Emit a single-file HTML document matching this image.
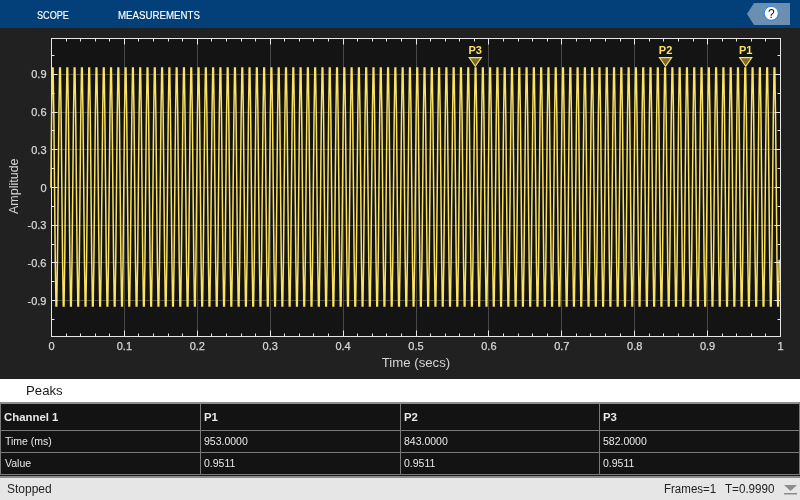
<!DOCTYPE html>
<html><head><meta charset="utf-8">
<style>
*{margin:0;padding:0;box-sizing:border-box}
html,body{width:800px;height:500px;overflow:hidden;background:#212121;font-family:"Liberation Sans",sans-serif}
#wrap{position:absolute;left:0;top:0;width:800px;height:500px;will-change:transform}
#hdr{position:absolute;left:0;top:0;width:800px;height:28px;background:#03407a}
.tab{position:absolute;top:8px;color:#fff;font-size:10.5px;-webkit-text-stroke:0.15px #fff;line-height:14px;white-space:nowrap;transform-origin:0 0}
#plot{position:absolute;left:0;top:0;width:800px;height:380px}
#plot text{font-family:"Liberation Sans",sans-serif}
#peaks{position:absolute;left:0;top:379px;width:800px;height:24px;background:#fff}
#peaks span{position:absolute;left:26px;top:4.4px;font-size:13.2px;color:#1a1a1a}
#tbl{position:absolute;left:0;top:402px;width:800px;height:73px;background:#131313;border:solid #7a7a7a;border-width:2px 1px 1px 1px;border-top-color:#8e8e8e}
#sep{position:absolute;left:0;top:475px;width:800px;height:3px;background:#1c1c1c;border-bottom:2px solid #8a8a8a}
.cell{position:absolute;color:#e8e8e8;font-size:10.5px;white-space:nowrap}
.hl{position:absolute;background:#7a7a7a}
#status{position:absolute;left:0;top:478px;width:800px;height:22px;background:#e6e6e6;color:#222;font-size:12px}
</style></head><body><div id="wrap">
<div id="hdr">
<div class="tab" style="left:37px;transform:scaleX(0.866)">SCOPE</div>
<div class="tab" style="left:118px;transform:scaleX(0.923)">MEASUREMENTS</div>
<svg style="position:absolute;left:747px;top:3px" width="43" height="22" viewBox="0 0 43 22">
<path d="M7 0H43V22H7L0 11Z" fill="#6a8fb3"/>
<circle cx="24.3" cy="10.3" r="7" fill="#fff" stroke="#2a82d8" stroke-width="1"/>
<text x="24.3" y="14.5" text-anchor="middle" font-size="12" fill="#111" font-family="Liberation Sans">?</text>
</svg>
</div>
<svg id="plot" width="800" height="380" viewBox="0 0 800 380">
<rect x="51" y="38" width="730" height="299" fill="#141414"/>
<path d="M124.50 38V337M197.50 38V337M270.50 38V337M343.50 38V337M416.50 38V337M488.50 38V337M561.50 38V337M634.50 38V337M707.50 38V337M51 74.50H781M51 112.50H781M51 149.50H781M51 187.50H781M51 225.50H781M51 262.50H781M51 300.50H781" stroke="#484848" stroke-width="1" fill="none"/>
<rect x="51.5" y="38.5" width="729" height="298" fill="none" stroke="#e6e6e6" stroke-width="1"/>
<path fill="none" stroke="#fae262" stroke-width="1.5" stroke-linecap="square" d="M50.90 187.00L51.63 113.41M51.63 113.41L52.36 67.93M52.36 67.93L53.09 67.93M53.09 67.93L53.82 113.41M53.82 113.41L54.55 187.00M54.55 187.00L55.27 260.59M55.27 260.59L56.00 306.07M56.00 306.07L56.73 306.07M56.73 306.07L57.46 260.59M57.46 260.59L58.19 187.00M58.19 187.00L58.92 113.41M58.92 113.41L59.65 67.93M59.65 67.93L60.38 67.93M60.38 67.93L61.11 113.41M61.11 113.41L61.84 187.00M61.84 187.00L62.56 260.59M62.56 260.59L63.29 306.07M63.29 306.07L64.02 306.07M64.02 306.07L64.75 260.59M64.75 260.59L65.48 187.00M65.48 187.00L66.21 113.41M66.21 113.41L66.94 67.93M66.94 67.93L67.67 67.93M67.67 67.93L68.40 113.41M68.40 113.41L69.12 187.00M69.12 187.00L69.85 260.59M69.85 260.59L70.58 306.07M70.58 306.07L71.31 306.07M71.31 306.07L72.04 260.59M72.04 260.59L72.77 187.00M72.77 187.00L73.50 113.41M73.50 113.41L74.23 67.93M74.23 67.93L74.96 67.93M74.96 67.93L75.69 113.41M75.69 113.41L76.42 187.00M76.42 187.00L77.14 260.59M77.14 260.59L77.87 306.07M77.87 306.07L78.60 306.07M78.60 306.07L79.33 260.59M79.33 260.59L80.06 187.00M80.06 187.00L80.79 113.41M80.79 113.41L81.52 67.93M81.52 67.93L82.25 67.93M82.25 67.93L82.98 113.41M82.98 113.41L83.71 187.00M83.71 187.00L84.43 260.59M84.43 260.59L85.16 306.07M85.16 306.07L85.89 306.07M85.89 306.07L86.62 260.59M86.62 260.59L87.35 187.00M87.35 187.00L88.08 113.41M88.08 113.41L88.81 67.93M88.81 67.93L89.54 67.93M89.54 67.93L90.27 113.41M90.27 113.41L91.00 187.00M91.00 187.00L91.72 260.59M91.72 260.59L92.45 306.07M92.45 306.07L93.18 306.07M93.18 306.07L93.91 260.59M93.91 260.59L94.64 187.00M94.64 187.00L95.37 113.41M95.37 113.41L96.10 67.93M96.10 67.93L96.83 67.93M96.83 67.93L97.56 113.41M97.56 113.41L98.29 187.00M98.29 187.00L99.01 260.59M99.01 260.59L99.74 306.07M99.74 306.07L100.47 306.07M100.47 306.07L101.20 260.59M101.20 260.59L101.93 187.00M101.93 187.00L102.66 113.41M102.66 113.41L103.39 67.93M103.39 67.93L104.12 67.93M104.12 67.93L104.85 113.41M104.85 113.41L105.58 187.00M105.58 187.00L106.30 260.59M106.30 260.59L107.03 306.07M107.03 306.07L107.76 306.07M107.76 306.07L108.49 260.59M108.49 260.59L109.22 187.00M109.22 187.00L109.95 113.41M109.95 113.41L110.68 67.93M110.68 67.93L111.41 67.93M111.41 67.93L112.14 113.41M112.14 113.41L112.87 187.00M112.87 187.00L113.59 260.59M113.59 260.59L114.32 306.07M114.32 306.07L115.05 306.07M115.05 306.07L115.78 260.59M115.78 260.59L116.51 187.00M116.51 187.00L117.24 113.41M117.24 113.41L117.97 67.93M117.97 67.93L118.70 67.93M118.70 67.93L119.43 113.41M119.43 113.41L120.16 187.00M120.16 187.00L120.88 260.59M120.88 260.59L121.61 306.07M121.61 306.07L122.34 306.07M122.34 306.07L123.07 260.59M123.07 260.59L123.80 187.00M123.80 187.00L124.53 113.41M124.53 113.41L125.26 67.93M125.26 67.93L125.99 67.93M125.99 67.93L126.72 113.41M126.72 113.41L127.45 187.00M127.45 187.00L128.17 260.59M128.17 260.59L128.90 306.07M128.90 306.07L129.63 306.07M129.63 306.07L130.36 260.59M130.36 260.59L131.09 187.00M131.09 187.00L131.82 113.41M131.82 113.41L132.55 67.93M132.55 67.93L133.28 67.93M133.28 67.93L134.01 113.41M134.01 113.41L134.74 187.00M134.74 187.00L135.46 260.59M135.46 260.59L136.19 306.07M136.19 306.07L136.92 306.07M136.92 306.07L137.65 260.59M137.65 260.59L138.38 187.00M138.38 187.00L139.11 113.41M139.11 113.41L139.84 67.93M139.84 67.93L140.57 67.93M140.57 67.93L141.30 113.41M141.30 113.41L142.03 187.00M142.03 187.00L142.75 260.59M142.75 260.59L143.48 306.07M143.48 306.07L144.21 306.07M144.21 306.07L144.94 260.59M144.94 260.59L145.67 187.00M145.67 187.00L146.40 113.41M146.40 113.41L147.13 67.93M147.13 67.93L147.86 67.93M147.86 67.93L148.59 113.41M148.59 113.41L149.32 187.00M149.32 187.00L150.04 260.59M150.04 260.59L150.77 306.07M150.77 306.07L151.50 306.07M151.50 306.07L152.23 260.59M152.23 260.59L152.96 187.00M152.96 187.00L153.69 113.41M153.69 113.41L154.42 67.93M154.42 67.93L155.15 67.93M155.15 67.93L155.88 113.41M155.88 113.41L156.60 187.00M156.60 187.00L157.33 260.59M157.33 260.59L158.06 306.07M158.06 306.07L158.79 306.07M158.79 306.07L159.52 260.59M159.52 260.59L160.25 187.00M160.25 187.00L160.98 113.41M160.98 113.41L161.71 67.93M161.71 67.93L162.44 67.93M162.44 67.93L163.17 113.41M163.17 113.41L163.90 187.00M163.90 187.00L164.62 260.59M164.62 260.59L165.35 306.07M165.35 306.07L166.08 306.07M166.08 306.07L166.81 260.59M166.81 260.59L167.54 187.00M167.54 187.00L168.27 113.41M168.27 113.41L169.00 67.93M169.00 67.93L169.73 67.93M169.73 67.93L170.46 113.41M170.46 113.41L171.19 187.00M171.19 187.00L171.91 260.59M171.91 260.59L172.64 306.07M172.64 306.07L173.37 306.07M173.37 306.07L174.10 260.59M174.10 260.59L174.83 187.00M174.83 187.00L175.56 113.41M175.56 113.41L176.29 67.93M176.29 67.93L177.02 67.93M177.02 67.93L177.75 113.41M177.75 113.41L178.47 187.00M178.47 187.00L179.20 260.59M179.20 260.59L179.93 306.07M179.93 306.07L180.66 306.07M180.66 306.07L181.39 260.59M181.39 260.59L182.12 187.00M182.12 187.00L182.85 113.41M182.85 113.41L183.58 67.93M183.58 67.93L184.31 67.93M184.31 67.93L185.04 113.41M185.04 113.41L185.77 187.00M185.77 187.00L186.49 260.59M186.49 260.59L187.22 306.07M187.22 306.07L187.95 306.07M187.95 306.07L188.68 260.59M188.68 260.59L189.41 187.00M189.41 187.00L190.14 113.41M190.14 113.41L190.87 67.93M190.87 67.93L191.60 67.93M191.60 67.93L192.33 113.41M192.33 113.41L193.06 187.00M193.06 187.00L193.78 260.59M193.78 260.59L194.51 306.07M194.51 306.07L195.24 306.07M195.24 306.07L195.97 260.59M195.97 260.59L196.70 187.00M196.70 187.00L197.43 113.41M197.43 113.41L198.16 67.93M198.16 67.93L198.89 67.93M198.89 67.93L199.62 113.41M199.62 113.41L200.34 187.00M200.34 187.00L201.07 260.59M201.07 260.59L201.80 306.07M201.80 306.07L202.53 306.07M202.53 306.07L203.26 260.59M203.26 260.59L203.99 187.00M203.99 187.00L204.72 113.41M204.72 113.41L205.45 67.93M205.45 67.93L206.18 67.93M206.18 67.93L206.91 113.41M206.91 113.41L207.63 187.00M207.63 187.00L208.36 260.59M208.36 260.59L209.09 306.07M209.09 306.07L209.82 306.07M209.82 306.07L210.55 260.59M210.55 260.59L211.28 187.00M211.28 187.00L212.01 113.41M212.01 113.41L212.74 67.93M212.74 67.93L213.47 67.93M213.47 67.93L214.20 113.41M214.20 113.41L214.93 187.00M214.93 187.00L215.65 260.59M215.65 260.59L216.38 306.07M216.38 306.07L217.11 306.07M217.11 306.07L217.84 260.59M217.84 260.59L218.57 187.00M218.57 187.00L219.30 113.41M219.30 113.41L220.03 67.93M220.03 67.93L220.76 67.93M220.76 67.93L221.49 113.41M221.49 113.41L222.22 187.00M222.22 187.00L222.94 260.59M222.94 260.59L223.67 306.07M223.67 306.07L224.40 306.07M224.40 306.07L225.13 260.59M225.13 260.59L225.86 187.00M225.86 187.00L226.59 113.41M226.59 113.41L227.32 67.93M227.32 67.93L228.05 67.93M228.05 67.93L228.78 113.41M228.78 113.41L229.50 187.00M229.50 187.00L230.23 260.59M230.23 260.59L230.96 306.07M230.96 306.07L231.69 306.07M231.69 306.07L232.42 260.59M232.42 260.59L233.15 187.00M233.15 187.00L233.88 113.41M233.88 113.41L234.61 67.93M234.61 67.93L235.34 67.93M235.34 67.93L236.07 113.41M236.07 113.41L236.80 187.00M236.80 187.00L237.52 260.59M237.52 260.59L238.25 306.07M238.25 306.07L238.98 306.07M238.98 306.07L239.71 260.59M239.71 260.59L240.44 187.00M240.44 187.00L241.17 113.41M241.17 113.41L241.90 67.93M241.90 67.93L242.63 67.93M242.63 67.93L243.36 113.41M243.36 113.41L244.09 187.00M244.09 187.00L244.81 260.59M244.81 260.59L245.54 306.07M245.54 306.07L246.27 306.07M246.27 306.07L247.00 260.59M247.00 260.59L247.73 187.00M247.73 187.00L248.46 113.41M248.46 113.41L249.19 67.93M249.19 67.93L249.92 67.93M249.92 67.93L250.65 113.41M250.65 113.41L251.38 187.00M251.38 187.00L252.10 260.59M252.10 260.59L252.83 306.07M252.83 306.07L253.56 306.07M253.56 306.07L254.29 260.59M254.29 260.59L255.02 187.00M255.02 187.00L255.75 113.41M255.75 113.41L256.48 67.93M256.48 67.93L257.21 67.93M257.21 67.93L257.94 113.41M257.94 113.41L258.66 187.00M258.66 187.00L259.39 260.59M259.39 260.59L260.12 306.07M260.12 306.07L260.85 306.07M260.85 306.07L261.58 260.59M261.58 260.59L262.31 187.00M262.31 187.00L263.04 113.41M263.04 113.41L263.77 67.93M263.77 67.93L264.50 67.93M264.50 67.93L265.23 113.41M265.23 113.41L265.95 187.00M265.95 187.00L266.68 260.59M266.68 260.59L267.41 306.07M267.41 306.07L268.14 306.07M268.14 306.07L268.87 260.59M268.87 260.59L269.60 187.00M269.60 187.00L270.33 113.41M270.33 113.41L271.06 67.93M271.06 67.93L271.79 67.93M271.79 67.93L272.52 113.41M272.52 113.41L273.25 187.00M273.25 187.00L273.97 260.59M273.97 260.59L274.70 306.07M274.70 306.07L275.43 306.07M275.43 306.07L276.16 260.59M276.16 260.59L276.89 187.00M276.89 187.00L277.62 113.41M277.62 113.41L278.35 67.93M278.35 67.93L279.08 67.93M279.08 67.93L279.81 113.41M279.81 113.41L280.53 187.00M280.53 187.00L281.26 260.59M281.26 260.59L281.99 306.07M281.99 306.07L282.72 306.07M282.72 306.07L283.45 260.59M283.45 260.59L284.18 187.00M284.18 187.00L284.91 113.41M284.91 113.41L285.64 67.93M285.64 67.93L286.37 67.93M286.37 67.93L287.10 113.41M287.10 113.41L287.82 187.00M287.82 187.00L288.55 260.59M288.55 260.59L289.28 306.07M289.28 306.07L290.01 306.07M290.01 306.07L290.74 260.59M290.74 260.59L291.47 187.00M291.47 187.00L292.20 113.41M292.20 113.41L292.93 67.93M292.93 67.93L293.66 67.93M293.66 67.93L294.39 113.41M294.39 113.41L295.12 187.00M295.12 187.00L295.84 260.59M295.84 260.59L296.57 306.07M296.57 306.07L297.30 306.07M297.30 306.07L298.03 260.59M298.03 260.59L298.76 187.00M298.76 187.00L299.49 113.41M299.49 113.41L300.22 67.93M300.22 67.93L300.95 67.93M300.95 67.93L301.68 113.41M301.68 113.41L302.40 187.00M302.40 187.00L303.13 260.59M303.13 260.59L303.86 306.07M303.86 306.07L304.59 306.07M304.59 306.07L305.32 260.59M305.32 260.59L306.05 187.00M306.05 187.00L306.78 113.41M306.78 113.41L307.51 67.93M307.51 67.93L308.24 67.93M308.24 67.93L308.97 113.41M308.97 113.41L309.69 187.00M309.69 187.00L310.42 260.59M310.42 260.59L311.15 306.07M311.15 306.07L311.88 306.07M311.88 306.07L312.61 260.59M312.61 260.59L313.34 187.00M313.34 187.00L314.07 113.41M314.07 113.41L314.80 67.93M314.80 67.93L315.53 67.93M315.53 67.93L316.26 113.41M316.26 113.41L316.98 187.00M316.98 187.00L317.71 260.59M317.71 260.59L318.44 306.07M318.44 306.07L319.17 306.07M319.17 306.07L319.90 260.59M319.90 260.59L320.63 187.00M320.63 187.00L321.36 113.41M321.36 113.41L322.09 67.93M322.09 67.93L322.82 67.93M322.82 67.93L323.55 113.41M323.55 113.41L324.27 187.00M324.27 187.00L325.00 260.59M325.00 260.59L325.73 306.07M325.73 306.07L326.46 306.07M326.46 306.07L327.19 260.59M327.19 260.59L327.92 187.00M327.92 187.00L328.65 113.41M328.65 113.41L329.38 67.93M329.38 67.93L330.11 67.93M330.11 67.93L330.84 113.41M330.84 113.41L331.56 187.00M331.56 187.00L332.29 260.59M332.29 260.59L333.02 306.07M333.02 306.07L333.75 306.07M333.75 306.07L334.48 260.59M334.48 260.59L335.21 187.00M335.21 187.00L335.94 113.41M335.94 113.41L336.67 67.93M336.67 67.93L337.40 67.93M337.40 67.93L338.13 113.41M338.13 113.41L338.86 187.00M338.86 187.00L339.58 260.59M339.58 260.59L340.31 306.07M340.31 306.07L341.04 306.07M341.04 306.07L341.77 260.59M341.77 260.59L342.50 187.00M342.50 187.00L343.23 113.41M343.23 113.41L343.96 67.93M343.96 67.93L344.69 67.93M344.69 67.93L345.42 113.41M345.42 113.41L346.14 187.00M346.14 187.00L346.87 260.59M346.87 260.59L347.60 306.07M347.60 306.07L348.33 306.07M348.33 306.07L349.06 260.59M349.06 260.59L349.79 187.00M349.79 187.00L350.52 113.41M350.52 113.41L351.25 67.93M351.25 67.93L351.98 67.93M351.98 67.93L352.71 113.41M352.71 113.41L353.43 187.00M353.43 187.00L354.16 260.59M354.16 260.59L354.89 306.07M354.89 306.07L355.62 306.07M355.62 306.07L356.35 260.59M356.35 260.59L357.08 187.00M357.08 187.00L357.81 113.41M357.81 113.41L358.54 67.93M358.54 67.93L359.27 67.93M359.27 67.93L360.00 113.41M360.00 113.41L360.72 187.00M360.72 187.00L361.45 260.59M361.45 260.59L362.18 306.07M362.18 306.07L362.91 306.07M362.91 306.07L363.64 260.59M363.64 260.59L364.37 187.00M364.37 187.00L365.10 113.41M365.10 113.41L365.83 67.93M365.83 67.93L366.56 67.93M366.56 67.93L367.29 113.41M367.29 113.41L368.01 187.00M368.01 187.00L368.74 260.59M368.74 260.59L369.47 306.07M369.47 306.07L370.20 306.07M370.20 306.07L370.93 260.59M370.93 260.59L371.66 187.00M371.66 187.00L372.39 113.41M372.39 113.41L373.12 67.93M373.12 67.93L373.85 67.93M373.85 67.93L374.58 113.41M374.58 113.41L375.31 187.00M375.31 187.00L376.03 260.59M376.03 260.59L376.76 306.07M376.76 306.07L377.49 306.07M377.49 306.07L378.22 260.59M378.22 260.59L378.95 187.00M378.95 187.00L379.68 113.41M379.68 113.41L380.41 67.93M380.41 67.93L381.14 67.93M381.14 67.93L381.87 113.41M381.87 113.41L382.59 187.00M382.59 187.00L383.32 260.59M383.32 260.59L384.05 306.07M384.05 306.07L384.78 306.07M384.78 306.07L385.51 260.59M385.51 260.59L386.24 187.00M386.24 187.00L386.97 113.41M386.97 113.41L387.70 67.93M387.70 67.93L388.43 67.93M388.43 67.93L389.16 113.41M389.16 113.41L389.88 187.00M389.88 187.00L390.61 260.59M390.61 260.59L391.34 306.07M391.34 306.07L392.07 306.07M392.07 306.07L392.80 260.59M392.80 260.59L393.53 187.00M393.53 187.00L394.26 113.41M394.26 113.41L394.99 67.93M394.99 67.93L395.72 67.93M395.72 67.93L396.45 113.41M396.45 113.41L397.17 187.00M397.17 187.00L397.90 260.59M397.90 260.59L398.63 306.07M398.63 306.07L399.36 306.07M399.36 306.07L400.09 260.59M400.09 260.59L400.82 187.00M400.82 187.00L401.55 113.41M401.55 113.41L402.28 67.93M402.28 67.93L403.01 67.93M403.01 67.93L403.74 113.41M403.74 113.41L404.46 187.00M404.46 187.00L405.19 260.59M405.19 260.59L405.92 306.07M405.92 306.07L406.65 306.07M406.65 306.07L407.38 260.59M407.38 260.59L408.11 187.00M408.11 187.00L408.84 113.41M408.84 113.41L409.57 67.93M409.57 67.93L410.30 67.93M410.30 67.93L411.03 113.41M411.03 113.41L411.75 187.00M411.75 187.00L412.48 260.59M412.48 260.59L413.21 306.07M413.21 306.07L413.94 306.07M413.94 306.07L414.67 260.59M414.67 260.59L415.40 187.00M415.40 187.00L416.13 113.41M416.13 113.41L416.86 67.93M416.86 67.93L417.59 67.93M417.59 67.93L418.32 113.41M418.32 113.41L419.04 187.00M419.04 187.00L419.77 260.59M419.77 260.59L420.50 306.07M420.50 306.07L421.23 306.07M421.23 306.07L421.96 260.59M421.96 260.59L422.69 187.00M422.69 187.00L423.42 113.41M423.42 113.41L424.15 67.93M424.15 67.93L424.88 67.93M424.88 67.93L425.61 113.41M425.61 113.41L426.33 187.00M426.33 187.00L427.06 260.59M427.06 260.59L427.79 306.07M427.79 306.07L428.52 306.07M428.52 306.07L429.25 260.59M429.25 260.59L429.98 187.00M429.98 187.00L430.71 113.41M430.71 113.41L431.44 67.93M431.44 67.93L432.17 67.93M432.17 67.93L432.90 113.41M432.90 113.41L433.62 187.00M433.62 187.00L434.35 260.59M434.35 260.59L435.08 306.07M435.08 306.07L435.81 306.07M435.81 306.07L436.54 260.59M436.54 260.59L437.27 187.00M437.27 187.00L438.00 113.41M438.00 113.41L438.73 67.93M438.73 67.93L439.46 67.93M439.46 67.93L440.19 113.41M440.19 113.41L440.92 187.00M440.92 187.00L441.64 260.59M441.64 260.59L442.37 306.07M442.37 306.07L443.10 306.07M443.10 306.07L443.83 260.59M443.83 260.59L444.56 187.00M444.56 187.00L445.29 113.41M445.29 113.41L446.02 67.93M446.02 67.93L446.75 67.93M446.75 67.93L447.48 113.41M447.48 113.41L448.20 187.00M448.20 187.00L448.93 260.59M448.93 260.59L449.66 306.07M449.66 306.07L450.39 306.07M450.39 306.07L451.12 260.59M451.12 260.59L451.85 187.00M451.85 187.00L452.58 113.41M452.58 113.41L453.31 67.93M453.31 67.93L454.04 67.93M454.04 67.93L454.77 113.41M454.77 113.41L455.50 187.00M455.50 187.00L456.22 260.59M456.22 260.59L456.95 306.07M456.95 306.07L457.68 306.07M457.68 306.07L458.41 260.59M458.41 260.59L459.14 187.00M459.14 187.00L459.87 113.41M459.87 113.41L460.60 67.93M460.60 67.93L461.33 67.93M461.33 67.93L462.06 113.41M462.06 113.41L462.78 187.00M462.78 187.00L463.51 260.59M463.51 260.59L464.24 306.07M464.24 306.07L464.97 306.07M464.97 306.07L465.70 260.59M465.70 260.59L466.43 187.00M466.43 187.00L467.16 113.41M467.16 113.41L467.89 67.93M467.89 67.93L468.62 67.93M468.62 67.93L469.35 113.41M469.35 113.41L470.07 187.00M470.07 187.00L470.80 260.59M470.80 260.59L471.53 306.07M471.53 306.07L472.26 306.07M472.26 306.07L472.99 260.59M472.99 260.59L473.72 187.00M473.72 187.00L474.45 113.41M474.45 113.41L475.18 67.93M475.18 67.93L475.91 67.93M475.91 67.93L476.64 113.41M476.64 113.41L477.36 187.00M477.36 187.00L478.09 260.59M478.09 260.59L478.82 306.07M478.82 306.07L479.55 306.07M479.55 306.07L480.28 260.59M480.28 260.59L481.01 187.00M481.01 187.00L481.74 113.41M481.74 113.41L482.47 67.93M482.47 67.93L483.20 67.93M483.20 67.93L483.93 113.41M483.93 113.41L484.65 187.00M484.65 187.00L485.38 260.59M485.38 260.59L486.11 306.07M486.11 306.07L486.84 306.07M486.84 306.07L487.57 260.59M487.57 260.59L488.30 187.00M488.30 187.00L489.03 113.41M489.03 113.41L489.76 67.93M489.76 67.93L490.49 67.93M490.49 67.93L491.22 113.41M491.22 113.41L491.94 187.00M491.94 187.00L492.67 260.59M492.67 260.59L493.40 306.07M493.40 306.07L494.13 306.07M494.13 306.07L494.86 260.59M494.86 260.59L495.59 187.00M495.59 187.00L496.32 113.41M496.32 113.41L497.05 67.93M497.05 67.93L497.78 67.93M497.78 67.93L498.51 113.41M498.51 113.41L499.23 187.00M499.23 187.00L499.96 260.59M499.96 260.59L500.69 306.07M500.69 306.07L501.42 306.07M501.42 306.07L502.15 260.59M502.15 260.59L502.88 187.00M502.88 187.00L503.61 113.41M503.61 113.41L504.34 67.93M504.34 67.93L505.07 67.93M505.07 67.93L505.80 113.41M505.80 113.41L506.52 187.00M506.52 187.00L507.25 260.59M507.25 260.59L507.98 306.07M507.98 306.07L508.71 306.07M508.71 306.07L509.44 260.59M509.44 260.59L510.17 187.00M510.17 187.00L510.90 113.41M510.90 113.41L511.63 67.93M511.63 67.93L512.36 67.93M512.36 67.93L513.09 113.41M513.09 113.41L513.81 187.00M513.81 187.00L514.54 260.59M514.54 260.59L515.27 306.07M515.27 306.07L516.00 306.07M516.00 306.07L516.73 260.59M516.73 260.59L517.46 187.00M517.46 187.00L518.19 113.41M518.19 113.41L518.92 67.93M518.92 67.93L519.65 67.93M519.65 67.93L520.38 113.41M520.38 113.41L521.11 187.00M521.11 187.00L521.83 260.59M521.83 260.59L522.56 306.07M522.56 306.07L523.29 306.07M523.29 306.07L524.02 260.59M524.02 260.59L524.75 187.00M524.75 187.00L525.48 113.41M525.48 113.41L526.21 67.93M526.21 67.93L526.94 67.93M526.94 67.93L527.67 113.41M527.67 113.41L528.39 187.00M528.39 187.00L529.12 260.59M529.12 260.59L529.85 306.07M529.85 306.07L530.58 306.07M530.58 306.07L531.31 260.59M531.31 260.59L532.04 187.00M532.04 187.00L532.77 113.41M532.77 113.41L533.50 67.93M533.50 67.93L534.23 67.93M534.23 67.93L534.96 113.41M534.96 113.41L535.69 187.00M535.69 187.00L536.41 260.59M536.41 260.59L537.14 306.07M537.14 306.07L537.87 306.07M537.87 306.07L538.60 260.59M538.60 260.59L539.33 187.00M539.33 187.00L540.06 113.41M540.06 113.41L540.79 67.93M540.79 67.93L541.52 67.93M541.52 67.93L542.25 113.41M542.25 113.41L542.98 187.00M542.98 187.00L543.70 260.59M543.70 260.59L544.43 306.07M544.43 306.07L545.16 306.07M545.16 306.07L545.89 260.59M545.89 260.59L546.62 187.00M546.62 187.00L547.35 113.41M547.35 113.41L548.08 67.93M548.08 67.93L548.81 67.93M548.81 67.93L549.54 113.41M549.54 113.41L550.26 187.00M550.26 187.00L550.99 260.59M550.99 260.59L551.72 306.07M551.72 306.07L552.45 306.07M552.45 306.07L553.18 260.59M553.18 260.59L553.91 187.00M553.91 187.00L554.64 113.41M554.64 113.41L555.37 67.93M555.37 67.93L556.10 67.93M556.10 67.93L556.83 113.41M556.83 113.41L557.55 187.00M557.55 187.00L558.28 260.59M558.28 260.59L559.01 306.07M559.01 306.07L559.74 306.07M559.74 306.07L560.47 260.59M560.47 260.59L561.20 187.00M561.20 187.00L561.93 113.41M561.93 113.41L562.66 67.93M562.66 67.93L563.39 67.93M563.39 67.93L564.12 113.41M564.12 113.41L564.84 187.00M564.84 187.00L565.57 260.59M565.57 260.59L566.30 306.07M566.30 306.07L567.03 306.07M567.03 306.07L567.76 260.59M567.76 260.59L568.49 187.00M568.49 187.00L569.22 113.41M569.22 113.41L569.95 67.93M569.95 67.93L570.68 67.93M570.68 67.93L571.41 113.41M571.41 113.41L572.13 187.00M572.13 187.00L572.86 260.59M572.86 260.59L573.59 306.07M573.59 306.07L574.32 306.07M574.32 306.07L575.05 260.59M575.05 260.59L575.78 187.00M575.78 187.00L576.51 113.41M576.51 113.41L577.24 67.93M577.24 67.93L577.97 67.93M577.97 67.93L578.70 113.41M578.70 113.41L579.42 187.00M579.42 187.00L580.15 260.59M580.15 260.59L580.88 306.07M580.88 306.07L581.61 306.07M581.61 306.07L582.34 260.59M582.34 260.59L583.07 187.00M583.07 187.00L583.80 113.41M583.80 113.41L584.53 67.93M584.53 67.93L585.26 67.93M585.26 67.93L585.99 113.41M585.99 113.41L586.71 187.00M586.71 187.00L587.44 260.59M587.44 260.59L588.17 306.07M588.17 306.07L588.90 306.07M588.90 306.07L589.63 260.59M589.63 260.59L590.36 187.00M590.36 187.00L591.09 113.41M591.09 113.41L591.82 67.93M591.82 67.93L592.55 67.93M592.55 67.93L593.28 113.41M593.28 113.41L594.00 187.00M594.00 187.00L594.73 260.59M594.73 260.59L595.46 306.07M595.46 306.07L596.19 306.07M596.19 306.07L596.92 260.59M596.92 260.59L597.65 187.00M597.65 187.00L598.38 113.41M598.38 113.41L599.11 67.93M599.11 67.93L599.84 67.93M599.84 67.93L600.57 113.41M600.57 113.41L601.29 187.00M601.29 187.00L602.02 260.59M602.02 260.59L602.75 306.07M602.75 306.07L603.48 306.07M603.48 306.07L604.21 260.59M604.21 260.59L604.94 187.00M604.94 187.00L605.67 113.41M605.67 113.41L606.40 67.93M606.40 67.93L607.13 67.93M607.13 67.93L607.86 113.41M607.86 113.41L608.59 187.00M608.59 187.00L609.31 260.59M609.31 260.59L610.04 306.07M610.04 306.07L610.77 306.07M610.77 306.07L611.50 260.59M611.50 260.59L612.23 187.00M612.23 187.00L612.96 113.41M612.96 113.41L613.69 67.93M613.69 67.93L614.42 67.93M614.42 67.93L615.15 113.41M615.15 113.41L615.88 187.00M615.88 187.00L616.60 260.59M616.60 260.59L617.33 306.07M617.33 306.07L618.06 306.07M618.06 306.07L618.79 260.59M618.79 260.59L619.52 187.00M619.52 187.00L620.25 113.41M620.25 113.41L620.98 67.93M620.98 67.93L621.71 67.93M621.71 67.93L622.44 113.41M622.44 113.41L623.16 187.00M623.16 187.00L623.89 260.59M623.89 260.59L624.62 306.07M624.62 306.07L625.35 306.07M625.35 306.07L626.08 260.59M626.08 260.59L626.81 187.00M626.81 187.00L627.54 113.41M627.54 113.41L628.27 67.93M628.27 67.93L629.00 67.93M629.00 67.93L629.73 113.41M629.73 113.41L630.46 187.00M630.46 187.00L631.18 260.59M631.18 260.59L631.91 306.07M631.91 306.07L632.64 306.07M632.64 306.07L633.37 260.59M633.37 260.59L634.10 187.00M634.10 187.00L634.83 113.41M634.83 113.41L635.56 67.93M635.56 67.93L636.29 67.93M636.29 67.93L637.02 113.41M637.02 113.41L637.75 187.00M637.75 187.00L638.47 260.59M638.47 260.59L639.20 306.07M639.20 306.07L639.93 306.07M639.93 306.07L640.66 260.59M640.66 260.59L641.39 187.00M641.39 187.00L642.12 113.41M642.12 113.41L642.85 67.93M642.85 67.93L643.58 67.93M643.58 67.93L644.31 113.41M644.31 113.41L645.03 187.00M645.03 187.00L645.76 260.59M645.76 260.59L646.49 306.07M646.49 306.07L647.22 306.07M647.22 306.07L647.95 260.59M647.95 260.59L648.68 187.00M648.68 187.00L649.41 113.41M649.41 113.41L650.14 67.93M650.14 67.93L650.87 67.93M650.87 67.93L651.60 113.41M651.60 113.41L652.32 187.00M652.32 187.00L653.05 260.59M653.05 260.59L653.78 306.07M653.78 306.07L654.51 306.07M654.51 306.07L655.24 260.59M655.24 260.59L655.97 187.00M655.97 187.00L656.70 113.41M656.70 113.41L657.43 67.93M657.43 67.93L658.16 67.93M658.16 67.93L658.89 113.41M658.89 113.41L659.61 187.00M659.61 187.00L660.34 260.59M660.34 260.59L661.07 306.07M661.07 306.07L661.80 306.07M661.80 306.07L662.53 260.59M662.53 260.59L663.26 187.00M663.26 187.00L663.99 113.41M663.99 113.41L664.72 67.93M664.72 67.93L665.45 67.93M665.45 67.93L666.18 113.41M666.18 113.41L666.90 187.00M666.90 187.00L667.63 260.59M667.63 260.59L668.36 306.07M668.36 306.07L669.09 306.07M669.09 306.07L669.82 260.59M669.82 260.59L670.55 187.00M670.55 187.00L671.28 113.41M671.28 113.41L672.01 67.93M672.01 67.93L672.74 67.93M672.74 67.93L673.47 113.41M673.47 113.41L674.19 187.00M674.19 187.00L674.92 260.59M674.92 260.59L675.65 306.07M675.65 306.07L676.38 306.07M676.38 306.07L677.11 260.59M677.11 260.59L677.84 187.00M677.84 187.00L678.57 113.41M678.57 113.41L679.30 67.93M679.30 67.93L680.03 67.93M680.03 67.93L680.76 113.41M680.76 113.41L681.49 187.00M681.49 187.00L682.21 260.59M682.21 260.59L682.94 306.07M682.94 306.07L683.67 306.07M683.67 306.07L684.40 260.59M684.40 260.59L685.13 187.00M685.13 187.00L685.86 113.41M685.86 113.41L686.59 67.93M686.59 67.93L687.32 67.93M687.32 67.93L688.05 113.41M688.05 113.41L688.77 187.00M688.77 187.00L689.50 260.59M689.50 260.59L690.23 306.07M690.23 306.07L690.96 306.07M690.96 306.07L691.69 260.59M691.69 260.59L692.42 187.00M692.42 187.00L693.15 113.41M693.15 113.41L693.88 67.93M693.88 67.93L694.61 67.93M694.61 67.93L695.34 113.41M695.34 113.41L696.06 187.00M696.06 187.00L696.79 260.59M696.79 260.59L697.52 306.07M697.52 306.07L698.25 306.07M698.25 306.07L698.98 260.59M698.98 260.59L699.71 187.00M699.71 187.00L700.44 113.41M700.44 113.41L701.17 67.93M701.17 67.93L701.90 67.93M701.90 67.93L702.63 113.41M702.63 113.41L703.36 187.00M703.36 187.00L704.08 260.59M704.08 260.59L704.81 306.07M704.81 306.07L705.54 306.07M705.54 306.07L706.27 260.59M706.27 260.59L707.00 187.00M707.00 187.00L707.73 113.41M707.73 113.41L708.46 67.93M708.46 67.93L709.19 67.93M709.19 67.93L709.92 113.41M709.92 113.41L710.64 187.00M710.64 187.00L711.37 260.59M711.37 260.59L712.10 306.07M712.10 306.07L712.83 306.07M712.83 306.07L713.56 260.59M713.56 260.59L714.29 187.00M714.29 187.00L715.02 113.41M715.02 113.41L715.75 67.93M715.75 67.93L716.48 67.93M716.48 67.93L717.21 113.41M717.21 113.41L717.94 187.00M717.94 187.00L718.66 260.59M718.66 260.59L719.39 306.07M719.39 306.07L720.12 306.07M720.12 306.07L720.85 260.59M720.85 260.59L721.58 187.00M721.58 187.00L722.31 113.41M722.31 113.41L723.04 67.93M723.04 67.93L723.77 67.93M723.77 67.93L724.50 113.41M724.50 113.41L725.23 187.00M725.23 187.00L725.95 260.59M725.95 260.59L726.68 306.07M726.68 306.07L727.41 306.07M727.41 306.07L728.14 260.59M728.14 260.59L728.87 187.00M728.87 187.00L729.60 113.41M729.60 113.41L730.33 67.93M730.33 67.93L731.06 67.93M731.06 67.93L731.79 113.41M731.79 113.41L732.51 187.00M732.51 187.00L733.24 260.59M733.24 260.59L733.97 306.07M733.97 306.07L734.70 306.07M734.70 306.07L735.43 260.59M735.43 260.59L736.16 187.00M736.16 187.00L736.89 113.41M736.89 113.41L737.62 67.93M737.62 67.93L738.35 67.93M738.35 67.93L739.08 113.41M739.08 113.41L739.80 187.00M739.80 187.00L740.53 260.59M740.53 260.59L741.26 306.07M741.26 306.07L741.99 306.07M741.99 306.07L742.72 260.59M742.72 260.59L743.45 187.00M743.45 187.00L744.18 113.41M744.18 113.41L744.91 67.93M744.91 67.93L745.64 67.93M745.64 67.93L746.37 113.41M746.37 113.41L747.09 187.00M747.09 187.00L747.82 260.59M747.82 260.59L748.55 306.07M748.55 306.07L749.28 306.07M749.28 306.07L750.01 260.59M750.01 260.59L750.74 187.00M750.74 187.00L751.47 113.41M751.47 113.41L752.20 67.93M752.20 67.93L752.93 67.93M752.93 67.93L753.66 113.41M753.66 113.41L754.38 187.00M754.38 187.00L755.11 260.59M755.11 260.59L755.84 306.07M755.84 306.07L756.57 306.07M756.57 306.07L757.30 260.59M757.30 260.59L758.03 187.00M758.03 187.00L758.76 113.41M758.76 113.41L759.49 67.93M759.49 67.93L760.22 67.93M760.22 67.93L760.95 113.41M760.95 113.41L761.67 187.00M761.67 187.00L762.40 260.59M762.40 260.59L763.13 306.07M763.13 306.07L763.86 306.07M763.86 306.07L764.59 260.59M764.59 260.59L765.32 187.00M765.32 187.00L766.05 113.41M766.05 113.41L766.78 67.93M766.78 67.93L767.51 67.93M767.51 67.93L768.24 113.41M768.24 113.41L768.96 187.00M768.96 187.00L769.69 260.59M769.69 260.59L770.42 306.07M770.42 306.07L771.15 306.07M771.15 306.07L771.88 260.59M771.88 260.59L772.61 187.00M772.61 187.00L773.34 113.41M773.34 113.41L774.07 67.93M774.07 67.93L774.80 67.93M774.80 67.93L775.53 113.41M775.53 113.41L776.25 187.00M776.25 187.00L776.98 260.59M776.98 260.59L777.71 306.07M777.71 306.07L778.44 306.07M778.44 306.07L779.17 260.59"/>
<path d="M51.50 38.5v6M51.50 336.5v-6M66.50 38.5v3M66.50 336.5v-3M80.50 38.5v3M80.50 336.5v-3M95.50 38.5v3M95.50 336.5v-3M109.50 38.5v3M109.50 336.5v-3M124.50 38.5v6M124.50 336.5v-6M138.50 38.5v3M138.50 336.5v-3M153.50 38.5v3M153.50 336.5v-3M168.50 38.5v3M168.50 336.5v-3M182.50 38.5v3M182.50 336.5v-3M197.50 38.5v6M197.50 336.5v-6M211.50 38.5v3M211.50 336.5v-3M226.50 38.5v3M226.50 336.5v-3M241.50 38.5v3M241.50 336.5v-3M255.50 38.5v3M255.50 336.5v-3M270.50 38.5v6M270.50 336.5v-6M284.50 38.5v3M284.50 336.5v-3M299.50 38.5v3M299.50 336.5v-3M313.50 38.5v3M313.50 336.5v-3M328.50 38.5v3M328.50 336.5v-3M343.50 38.5v6M343.50 336.5v-6M357.50 38.5v3M357.50 336.5v-3M372.50 38.5v3M372.50 336.5v-3M386.50 38.5v3M386.50 336.5v-3M401.50 38.5v3M401.50 336.5v-3M416.50 38.5v6M416.50 336.5v-6M430.50 38.5v3M430.50 336.5v-3M445.50 38.5v3M445.50 336.5v-3M459.50 38.5v3M459.50 336.5v-3M474.50 38.5v3M474.50 336.5v-3M488.50 38.5v6M488.50 336.5v-6M503.50 38.5v3M503.50 336.5v-3M518.50 38.5v3M518.50 336.5v-3M532.50 38.5v3M532.50 336.5v-3M547.50 38.5v3M547.50 336.5v-3M561.50 38.5v6M561.50 336.5v-6M576.50 38.5v3M576.50 336.5v-3M590.50 38.5v3M590.50 336.5v-3M605.50 38.5v3M605.50 336.5v-3M620.50 38.5v3M620.50 336.5v-3M634.50 38.5v6M634.50 336.5v-6M649.50 38.5v3M649.50 336.5v-3M663.50 38.5v3M663.50 336.5v-3M678.50 38.5v3M678.50 336.5v-3M693.50 38.5v3M693.50 336.5v-3M707.50 38.5v6M707.50 336.5v-6M722.50 38.5v3M722.50 336.5v-3M736.50 38.5v3M736.50 336.5v-3M751.50 38.5v3M751.50 336.5v-3M765.50 38.5v3M765.50 336.5v-3M780.50 38.5v6M780.50 336.5v-6M51.5 319.50h3M780.5 319.50h-3M51.5 300.50h6M780.5 300.50h-6M51.5 281.50h3M780.5 281.50h-3M51.5 262.50h6M780.5 262.50h-6M51.5 244.50h3M780.5 244.50h-3M51.5 225.50h6M780.5 225.50h-6M51.5 206.50h3M780.5 206.50h-3M51.5 187.50h6M780.5 187.50h-6M51.5 168.50h3M780.5 168.50h-3M51.5 149.50h6M780.5 149.50h-6M51.5 130.50h3M780.5 130.50h-3M51.5 112.50h6M780.5 112.50h-6M51.5 93.50h3M780.5 93.50h-3M51.5 74.50h6M780.5 74.50h-6M51.5 55.50h3M780.5 55.50h-3" stroke="#e6e6e6" stroke-width="1" fill="none"/>
<path d="M469.18 57.6H481.38L475.28 66.2Z" fill="#7a6c2c" stroke="#fae262" stroke-width="1.1" stroke-linejoin="miter"/>
<text x="475.28" y="54" text-anchor="middle" font-weight="bold" font-size="11" fill="#fae262">P3</text>
<path d="M659.45 57.6H671.65L665.55 66.2Z" fill="#7a6c2c" stroke="#fae262" stroke-width="1.1" stroke-linejoin="miter"/>
<text x="665.55" y="54" text-anchor="middle" font-weight="bold" font-size="11" fill="#fae262">P2</text>
<path d="M739.64 57.6H751.84L745.74 66.2Z" fill="#7a6c2c" stroke="#fae262" stroke-width="1.1" stroke-linejoin="miter"/>
<text x="745.74" y="54" text-anchor="middle" font-weight="bold" font-size="11" fill="#fae262">P1</text>
<g font-size="11" fill="#d8d8d8" stroke="#d8d8d8" stroke-width="0.25"><text x="51.50" y="350" text-anchor="middle">0</text><text x="124.40" y="350" text-anchor="middle">0.1</text><text x="197.30" y="350" text-anchor="middle">0.2</text><text x="270.20" y="350" text-anchor="middle">0.3</text><text x="343.10" y="350" text-anchor="middle">0.4</text><text x="416.00" y="350" text-anchor="middle">0.5</text><text x="488.90" y="350" text-anchor="middle">0.6</text><text x="561.80" y="350" text-anchor="middle">0.7</text><text x="634.70" y="350" text-anchor="middle">0.8</text><text x="707.60" y="350" text-anchor="middle">0.9</text><text x="780.50" y="350" text-anchor="middle">1</text><text x="46.5" y="78.37" text-anchor="end">0.9</text><text x="46.5" y="116.08" text-anchor="end">0.6</text><text x="46.5" y="153.79" text-anchor="end">0.3</text><text x="46.5" y="191.50" text-anchor="end">0</text><text x="46.5" y="229.21" text-anchor="end">-0.3</text><text x="46.5" y="266.92" text-anchor="end">-0.6</text><text x="46.5" y="304.63" text-anchor="end">-0.9</text></g>
<text x="416" y="367" text-anchor="middle" font-size="13.2" fill="#d6d6d6">Time (secs)</text>
<text transform="translate(18,186.2) rotate(-90) scale(0.92,1)" text-anchor="middle" font-size="13.6" fill="#d6d6d6">Amplitude</text>
</svg>
<div id="peaks"><span>Peaks</span></div>
<div id="tbl"></div><div id="sep"></div>
<div class="hl" style="left:0;top:430px;width:800px;height:1px"></div>
<div class="hl" style="left:0;top:452px;width:800px;height:1px"></div>
<div class="hl" style="left:200px;top:404px;width:1px;height:70px"></div>
<div class="hl" style="left:400px;top:404px;width:1px;height:70px"></div>
<div class="hl" style="left:599px;top:404px;width:1px;height:70px"></div>
<div class="cell" style="left:4px;top:411px;font-weight:bold;font-size:11.4px">Channel 1</div>
<div class="cell" style="left:204px;top:411px;font-weight:bold;font-size:11.4px">P1</div>
<div class="cell" style="left:404px;top:411px;font-weight:bold;font-size:11.4px">P2</div>
<div class="cell" style="left:603px;top:411px;font-weight:bold;font-size:11.4px">P3</div>
<div class="cell" style="left:5px;top:435px">Time (ms)</div>
<div class="cell" style="left:204px;top:435px">953.0000</div>
<div class="cell" style="left:404px;top:435px">843.0000</div>
<div class="cell" style="left:603px;top:435px">582.0000</div>
<div class="cell" style="left:5px;top:457px">Value</div>
<div class="cell" style="left:204px;top:457px">0.9511</div>
<div class="cell" style="left:404px;top:457px">0.9511</div>
<div class="cell" style="left:603px;top:457px">0.9511</div>
<div id="status">
<span style="position:absolute;left:7px;top:4px">Stopped</span>
<span style="position:absolute;left:664px;top:4px;transform:scaleX(0.96);transform-origin:0 0">Frames=1</span>
<span style="position:absolute;left:725px;top:4px;transform:scaleX(0.97);transform-origin:0 0">T=0.9990</span>
<svg style="position:absolute;left:784px;top:7px" width="13" height="10"><path d="M0 0H13L6.5 6Z" fill="#8c8c8c"/><rect x="0" y="8" width="13" height="1.5" fill="#8c8c8c"/></svg>
</div>
</div></body></html>
